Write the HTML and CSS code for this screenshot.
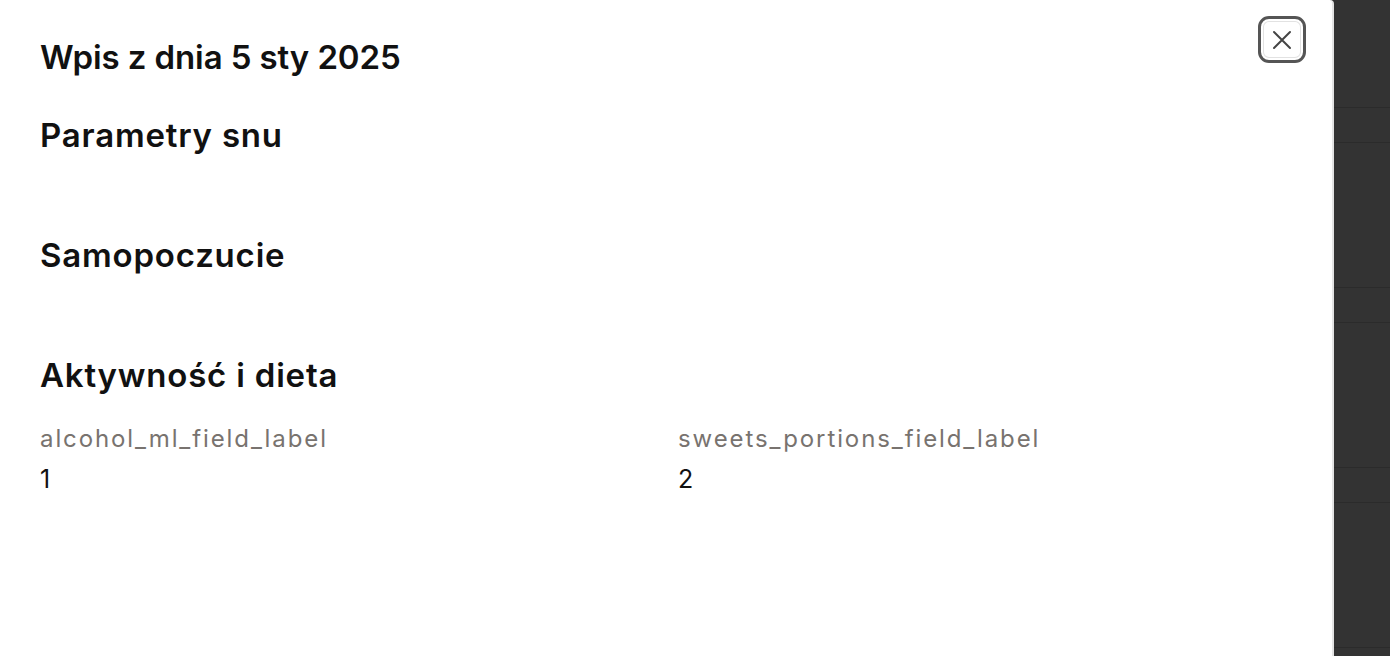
FILE: index.html
```html
<!DOCTYPE html>
<html lang="pl">
<head>
<meta charset="utf-8">
<title>Wpis</title>
<link rel="stylesheet" href="styles.css">
</head>
<body>
<div class="layout">
  <main class="sheet">
    <header class="sheet-header">
      <h1 class="title">Wpis z dnia 5 sty 2025</h1>
      <button class="close" aria-label="Zamknij">
        <svg width="22" height="22" viewBox="0 0 22 22"><path d="M3 3 L19 19 M19 3 L3 19" stroke="#444" stroke-width="2" stroke-linecap="round"/></svg>
      </button>
    </header>
    <section class="section">
      <h2 class="section-title">Parametry snu</h2>
    </section>
    <section class="section">
      <h2 class="section-title">Samopoczucie</h2>
    </section>
    <section class="section">
      <h2 class="section-title">Aktywność i dieta</h2>
      <div class="fields">
        <div class="field">
          <div class="label">alcohol_ml_field_label</div>
          <div class="value">1</div>
        </div>
        <div class="field">
          <div class="label">sweets_portions_field_label</div>
          <div class="value">2</div>
        </div>
      </div>
    </section>
  </main>
  <aside class="backdrop">
    <div class="row r-head"></div>
    <div class="row r-thin"></div>
    <div class="row r-tall"></div>
    <div class="row r-thin"></div>
    <div class="row r-tall"></div>
    <div class="row r-thin"></div>
    <div class="row r-tall"></div>
    <div class="row r-rest"></div>
  </aside>
</div>
</body>
</html>
```
FILE: styles.css
```css
* { box-sizing: border-box; }
html, body { margin: 0; padding: 0; }
body {
  font-family: Inter, "Noto Sans", "Liberation Sans", sans-serif;
  background: #333;
  height: 656px;
  overflow: hidden;
}
.layout {
  display: flex;
  height: 656px;
}
.sheet {
  width: 1334px;
  flex: none;
  background: #fff;
  border-right: 2px solid #e4e4e4;
  border-top-right-radius: 4px;
  padding: 16px 40px 0 40px;
  color: #111;
}
.sheet-header {
  display: flex;
  justify-content: space-between;
  align-items: flex-start;
}
.title {
  margin: 20px 0 0;
  font-size: 33px;
  font-weight: 600;
  letter-spacing: -0.1px;
  line-height: 42px;
}
.close {
  width: 48px;
  height: 47px;
  margin-right: -14px;
  border: 3px solid #555;
  border-radius: 11px;
  background: #fff;
  display: flex;
  align-items: center;
  justify-content: center;
  padding: 0;
  box-shadow: inset 0 0 0 2px #fff, inset 0 0 0 3px #e2e2e2;
}
.section {
  margin-top: 36px;
}
.section + .section { margin-top: 78px; }
.section-title {
  margin: 0;
  font-size: 33px;
  font-weight: 600;
  letter-spacing: 0.8px;
  line-height: 42px;
}
.fields {
  display: grid;
  grid-template-columns: 1fr 1fr;
  column-gap: 24px;
  margin-top: 29px;
}
.label {
  color: #78736f;
  font-size: 24px;
  line-height: 28px;
  letter-spacing: 1.9px;
}
.value {
  margin-top: 12px;
  font-size: 25px;
  line-height: 28px;
  color: #111;
}
.backdrop {
  flex: 1;
  display: flex;
  flex-direction: column;
  background: #333;
}
.row { flex: none; border-bottom: 1px solid #2b2b2b; }
.r-head { height: 108px; }
.r-thin { height: 35px; }
.r-tall { height: 145px; }
.r-rest { flex: 1; border-bottom: none; }
```
